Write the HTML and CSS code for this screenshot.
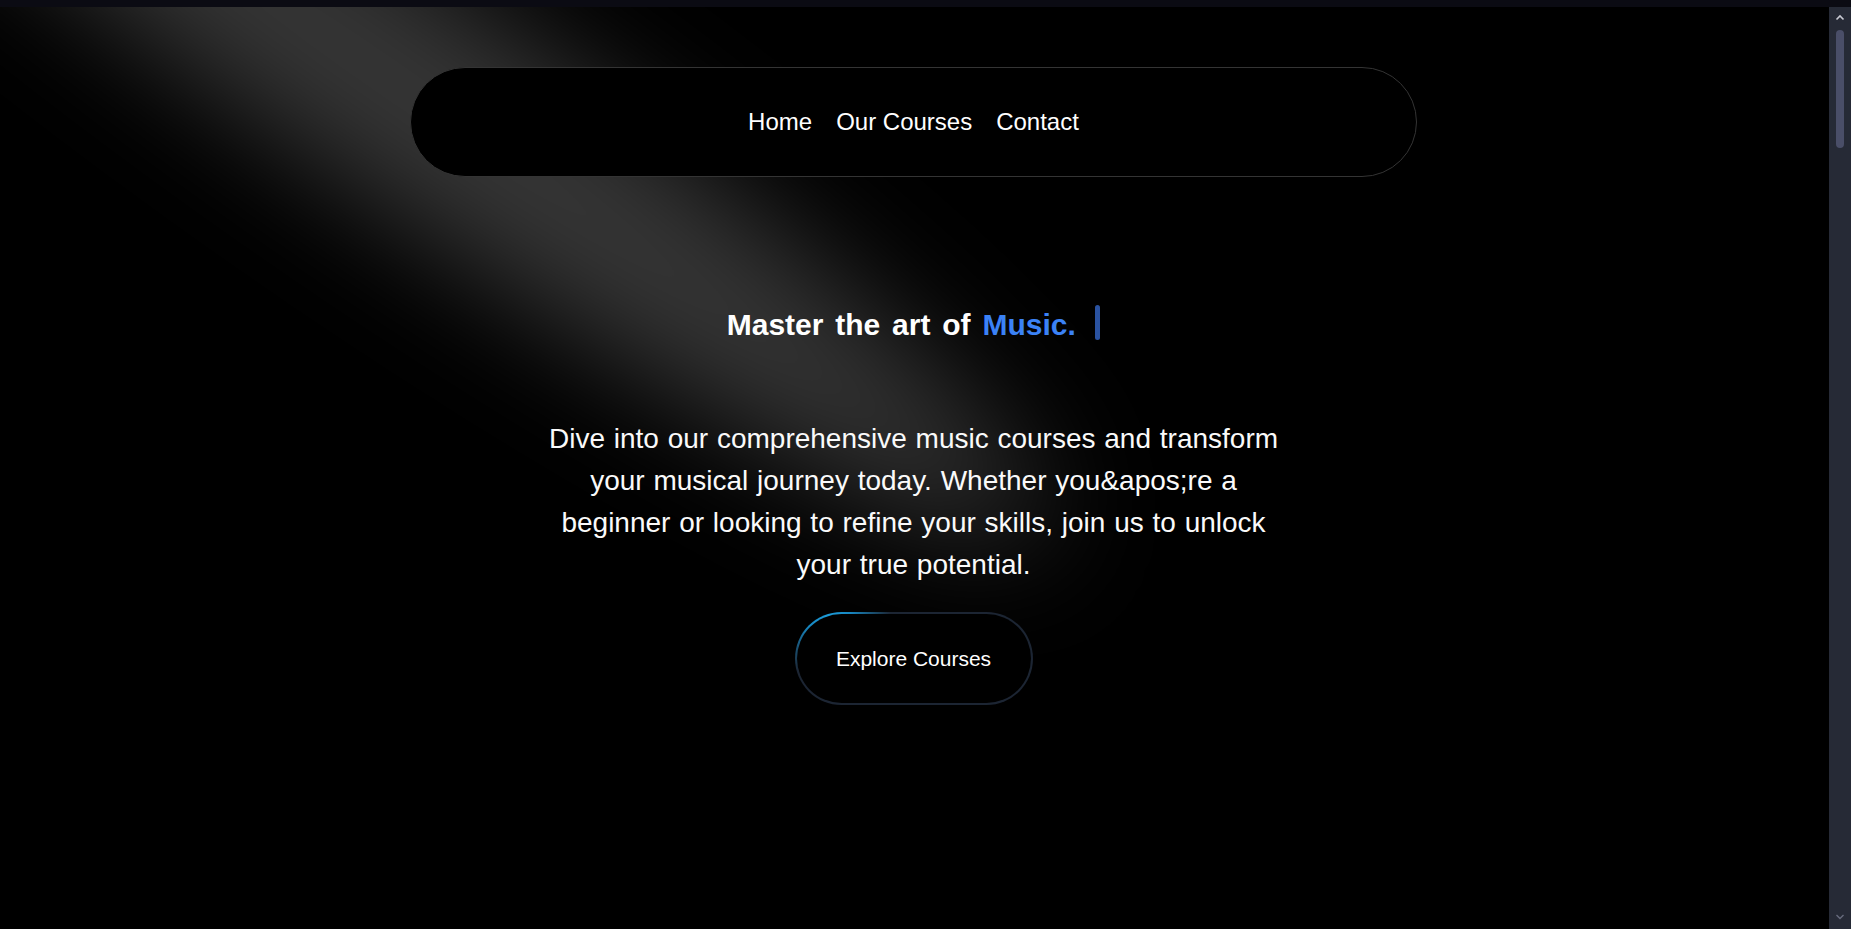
FILE: index.html
```html
<!DOCTYPE html>
<html lang="en">
<head>
<meta charset="utf-8">
<title>Music School</title>
<link rel="stylesheet" href="styles.css">
</head>
<body>
<div class="app">
  <div class="topbar"></div>
  <div class="frame">
    <main class="page">
      <svg class="spotlight" width="1829" height="922" viewBox="0 0 1829 922" aria-hidden="true">
        <defs>
          <filter id="spot-blur" x="-1500" y="-1500" width="4800" height="3900" filterUnits="userSpaceOnUse" color-interpolation-filters="sRGB">
            <feGaussianBlur stdDeviation="61"/>
          </filter>
        </defs>
        <g filter="url(#spot-blur)">
          <ellipse cx="390" cy="72" rx="795" ry="111" transform="rotate(34.7 390 72)" fill="#ffffff" fill-opacity="0.21"/>
        </g>
      </svg>

      <nav class="nav">
        <a class="nav-link" href="#">Home</a>
        <a class="nav-link" href="#">Our Courses</a>
        <a class="nav-link" href="#">Contact</a>
      </nav>

      <section class="hero">
        <div class="headline">
          <h1 class="headline-text">Master the art of <span class="accent">Music.</span></h1>
          <span class="cursor"></span>
        </div>
        <p class="lead">Dive into our comprehensive music courses and transform your musical journey today. Whether you&amp;apos;re a beginner or looking to refine your skills, join us to unlock your true potential.</p>
        <a class="btn" href="#">Explore Courses</a>
      </section>
    </main>

    <div class="scrollbar">
      <svg class="sb-arrow" width="10" height="8" viewBox="0 0 10 8"><polyline points="1.5,6.5 5,3 8.5,6.5" fill="none" stroke="#c9cad3" stroke-width="1.6"/></svg>
      <div class="sb-thumb"></div>
      <div class="sb-space"></div>
      <svg class="sb-arrow" width="10" height="8" viewBox="0 0 10 8"><polyline points="1.5,2 5,5.5 8.5,2" fill="none" stroke="#676b7d" stroke-width="1.4"/></svg>
    </div>
  </div>
</div>
</body>
</html>
```

FILE: styles.css
```css
* {
  box-sizing: border-box;
  margin: 0;
  padding: 0;
}

html,
body {
  height: 100%;
  overflow: hidden;
  background: #000;
}

body {
  font-family: "Liberation Sans", Arial, sans-serif;
  color: #fff;
}

.app {
  display: flex;
  flex-direction: column;
  height: 100vh;
}

.topbar {
  flex: none;
  height: 7px;
  background: #0b0b13;
}

.frame {
  flex: 1;
  display: flex;
  min-height: 0;
}

.page {
  flex: 1;
  position: relative;
  overflow: hidden;
  background: #000;
  padding: 60px 2px 0 0;
}

.spotlight {
  position: absolute;
  top: 0;
  left: 0;
  pointer-events: none;
}

.nav {
  position: relative;
  z-index: 1;
  width: 1007px;
  height: 110px;
  margin: 0 auto;
  border: 1px solid #343434;
  border-radius: 55px;
  background: #000;
  display: flex;
  align-items: center;
  justify-content: center;
  gap: 24px;
}

.nav-link {
  color: #fff;
  text-decoration: none;
  font-size: 24px;
}

.hero {
  position: relative;
  z-index: 1;
  display: flex;
  flex-direction: column;
  align-items: center;
  padding-top: 128px;
}

.headline {
  display: flex;
  align-items: center;
  height: 40px;
}

.headline-text {
  font-size: 30px;
  font-weight: 700;
  line-height: 40px;
  word-spacing: 3.5px;
  color: #fff;
}

.accent {
  color: #3b82f6;
}

.cursor {
  width: 5px;
  height: 35px;
  border-radius: 3px;
  background: #2a52a0;
  margin-left: 19.5px;
  margin-bottom: 5px;
}

.lead {
  margin-top: 73px;
  max-width: 745px;
  text-align: center;
  font-size: 28px;
  line-height: 42px;
  word-spacing: 1px;
  color: #fafafa;
}

.btn {
  margin-top: 26px;
  width: 238px;
  height: 93px;
  border-radius: 47px;
  border: 2px solid transparent;
  background:
    linear-gradient(#000, #000) padding-box,
    radial-gradient(circle 62px at 34px 6px, #1d9edb 0%, #1787c1 35%, rgba(23, 135, 193, 0) 100%) border-box,
    linear-gradient(#1c2533, #1c2533) border-box;
  display: flex;
  align-items: center;
  justify-content: center;
  color: #fff;
  font-size: 21px;
  text-decoration: none;
}

.scrollbar {
  flex: none;
  width: 22px;
  background: #262a36;
  display: flex;
  flex-direction: column;
  align-items: center;
  padding: 6px 0 8px;
}

.sb-arrow {
  flex: none;
  display: block;
}

.sb-thumb {
  flex: none;
  width: 8px;
  height: 118px;
  margin-top: 9px;
  border-radius: 4px;
  background: #4a4e68;
}

.sb-space {
  flex: 1;
}
```
